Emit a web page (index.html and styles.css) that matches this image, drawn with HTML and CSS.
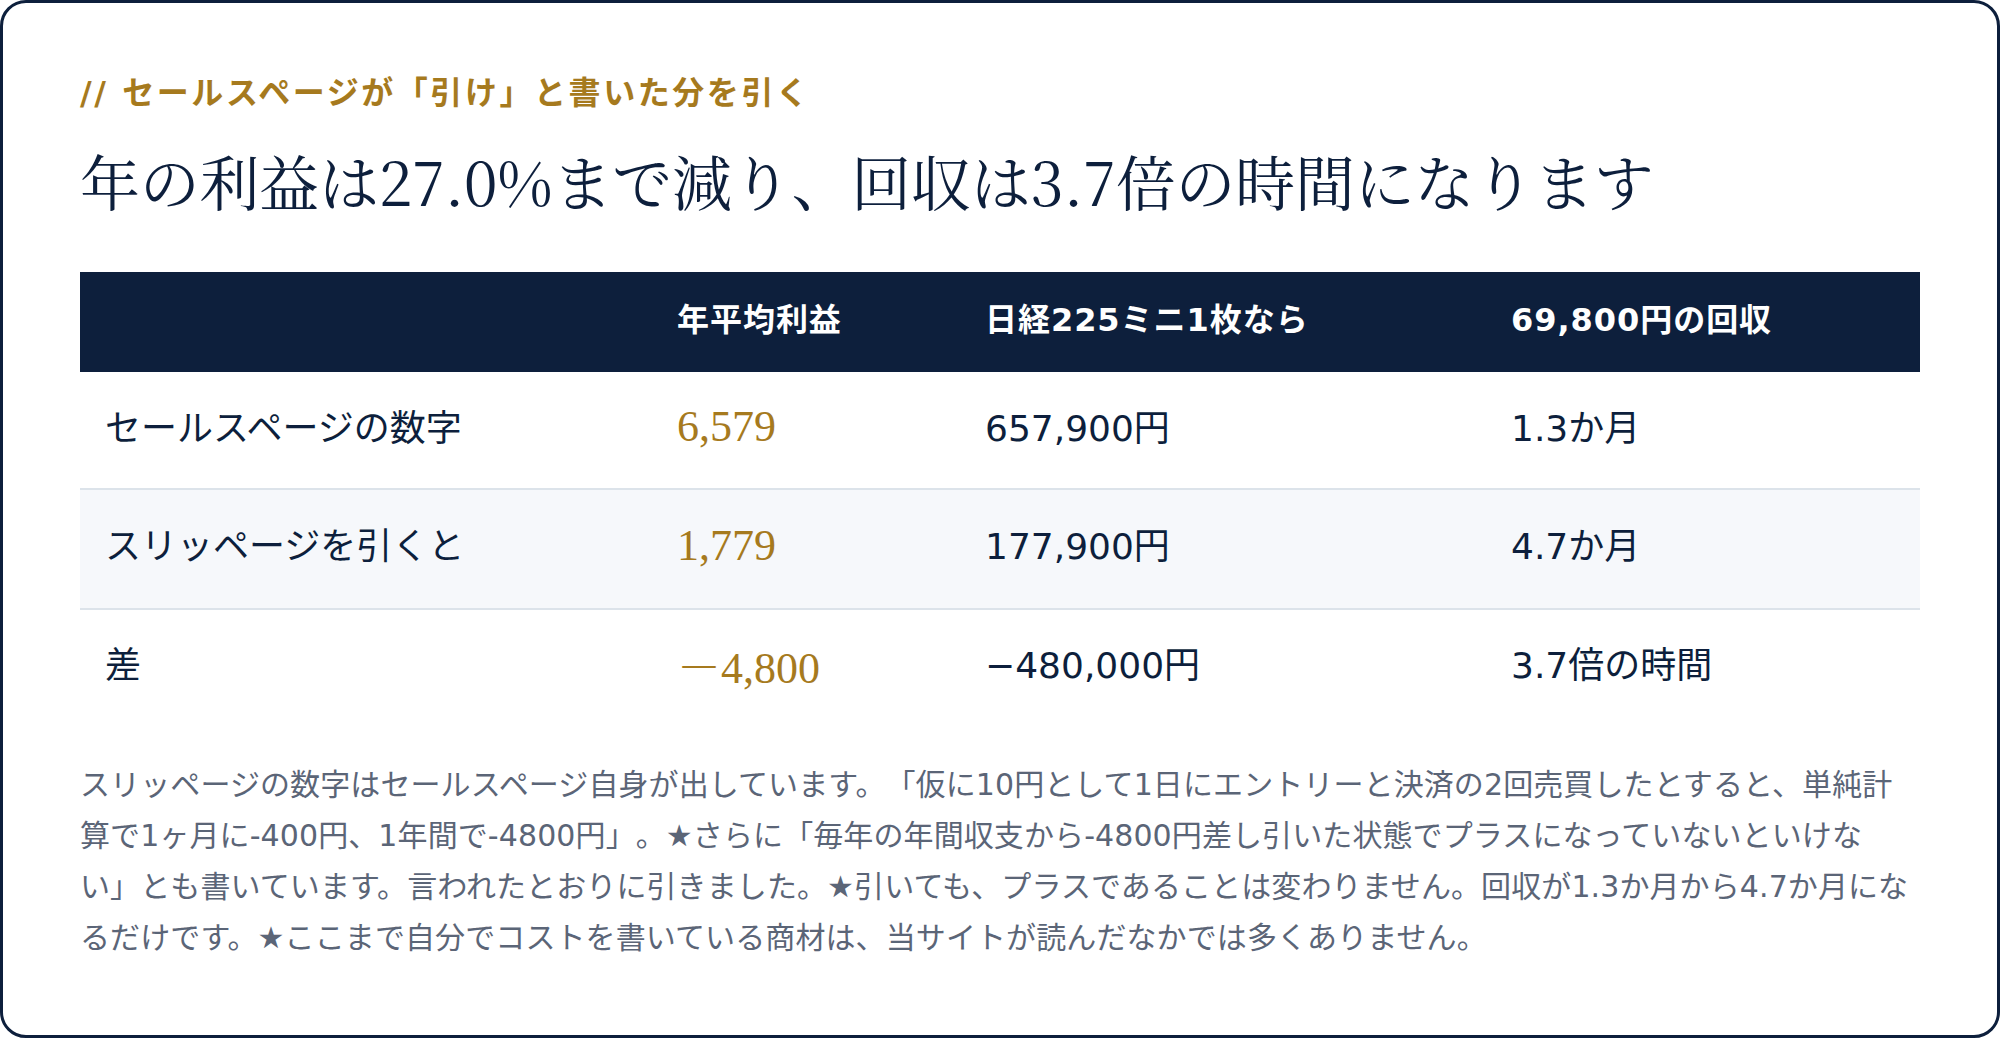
FILE: index.html
```html
<!DOCTYPE html>
<html lang="ja">
<head>
<meta charset="utf-8">
<title>スリッページ</title>
<link rel="stylesheet" href="styles.css">
</head>
<body>
<section class="card">
  <p class="kicker">// セールスページが「引け」と書いた分を引く</p>
  <h2 class="title">年の利益は27.0%まで減り、回収は3.7倍の時間になります</h2>
  <table class="cmp">
    <colgroup>
      <col class="c1"><col class="c2"><col class="c3"><col class="c4">
    </colgroup>
    <thead>
      <tr>
        <th></th>
        <th>年平均利益</th>
        <th>日経225ミニ1枚なら</th>
        <th>69,800円の回収</th>
      </tr>
    </thead>
    <tbody>
      <tr class="r1">
        <td>セールスページの数字</td>
        <td class="num">6,579</td>
        <td>657,900円</td>
        <td>1.3か月</td>
      </tr>
      <tr class="r2 alt">
        <td>スリッページを引くと</td>
        <td class="num">1,779</td>
        <td>177,900円</td>
        <td>4.7か月</td>
      </tr>
      <tr class="r3">
        <td>差</td>
        <td class="num">－4,800</td>
        <td>−480,000円</td>
        <td>3.7倍の時間</td>
      </tr>
    </tbody>
  </table>
  <p class="note">スリッページの数字はセールスページ自身が出しています。「仮に10円として1日にエントリーと決済の2回売買したとすると、単純計算で1ヶ月に-400円、1年間で-4800円」。★さらに「毎年の年間収支から-4800円差し引いた状態でプラスになっていないといけない」とも書いています。言われたとおりに引きました。★引いても、プラスであることは変わりません。回収が1.3か月から4.7か月になるだけです。★ここまで自分でコストを書いている商材は、当サイトが読んだなかでは多くありません。</p>
</section>
</body>
</html>
```

FILE: styles.css
```css
html, body {
  margin: 0;
  padding: 0;
  background: #ffffff;
}

body {
  font-family: "DejaVu Sans", "Noto Sans CJK JP", sans-serif;
  color: #0d1f3c;
  text-spacing-trim: space-all;
}

.card {
  box-sizing: border-box;
  width: 2000px;
  height: 1038px;
  border: 3px solid #0d1f3c;
  border-radius: 26px;
  padding: 68px 77px 0 77px;
  background: #ffffff;
}

.kicker {
  margin: 0;
  font-size: 32px;
  line-height: 44px;
  font-weight: 700;
  letter-spacing: 0.08em;
  color: #a67a1e;
}

.title {
  margin: 26px 0 0 0;
  font-family: "Noto Serif CJK JP", serif;
  font-size: 60px;
  line-height: 78px;
  font-weight: 400;
  letter-spacing: -0.004em;
  color: #0d1f3c;
}

.cmp {
  margin-top: 53px;
  width: 1840px;
  border-collapse: collapse;
  table-layout: fixed;
}

.c1 { width: 572px; }
.c2 { width: 308px; }
.c3 { width: 526px; }
.c4 { width: 434px; }

.cmp th {
  box-sizing: border-box;
  height: 100px;
  padding: 0 0 10px 25px;
  background: #0d1f3c;
  color: #ffffff;
  font-size: 32px;
  font-weight: 700;
  letter-spacing: 0.03em;
  text-align: left;
}

.cmp td {
  box-sizing: border-box;
  padding: 0 0 11px 25px;
  font-size: 36px;
  color: #0d1f3c;
  text-align: left;
}

.cmp .r1 td {
  height: 117px;
}

.cmp .r2 td {
  height: 120px;
  padding-bottom: 12px;
  border-top: 2px solid #dce3ea;
}

.cmp .r3 td {
  height: 118px;
  padding-bottom: 14px;
  border-top: 2px solid #dce3ea;
}

.cmp tr.alt td {
  background: #f6f8fb;
}

.cmp td.num {
  padding-bottom: 7px;
  font-family: "Liberation Serif", "Noto Serif CJK JP", serif;
  font-size: 44px;
  color: #a67a1e;
}

.cmp .r3 td.num {
  padding-bottom: 10px;
}

.note {
  margin: 32px 0 0 0;
  font-size: 30px;
  line-height: 51px;
  letter-spacing: 0.1px;
  color: #5b6577;
}
```
